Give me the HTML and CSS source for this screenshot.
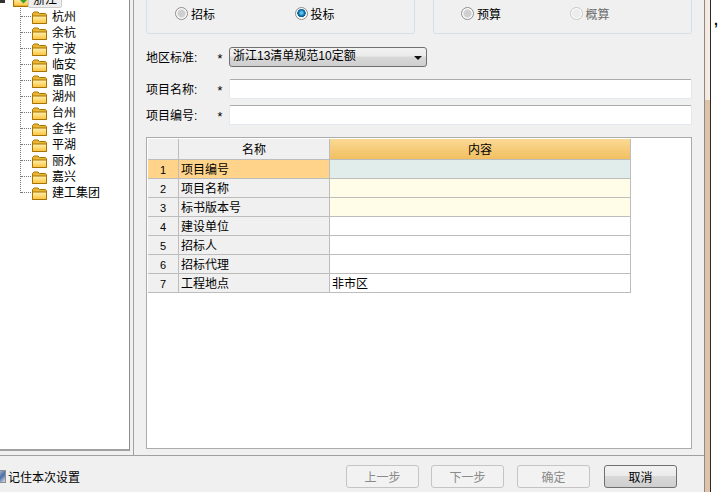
FILE: index.html
```html
<!DOCTYPE html>
<html lang="zh-CN">
<head>
    <meta charset="UTF-8">
    <title>新建项目</title>
    <link rel="stylesheet" href="styles.css">
</head>
<body>
    <svg class="defs" width="0" height="0">
        <defs>
            <linearGradient id="folder-fill" x1="0" y1="0" x2="0" y2="1">
                <stop offset="0" stop-color="#fff2b0"/>
                <stop offset="1" stop-color="#fdc13a"/>
            </linearGradient>
            <symbol id="folder" viewBox="0 0 16 13">
                <path d="M1.5 12.5V2.500L3 1h4l1.500 1.500h6l1 1v9z" fill="#e8b53a" stroke="#a87400"/>
                <path d="M1.500 12.500V5h14v7.500z" fill="url(#folder-fill)" stroke="#a87400"/>
            </symbol>
        </defs>
    </svg>

    <div class="window">
        <div class="dialog">
            <div class="top">
                <div class="tree-panel">
                    <div class="tree-root">
                        <span class="expander"></span>
                        <svg class="folder-open" width="17" height="14"><use href="#folder"/><path d="M10 5h3v2h2l-3.500 3.500L8 7h2z" fill="#3ca02c"/></svg>
                        <span class="tree-root-label">浙江</span>
                    </div>
                    <ul class="tree">
                        <li class="tree-row"><i class="tick"></i><svg width="16" height="13"><use href="#folder"/></svg><span>杭州</span></li>
                        <li class="tree-row"><i class="tick"></i><svg width="16" height="13"><use href="#folder"/></svg><span>余杭</span></li>
                        <li class="tree-row"><i class="tick"></i><svg width="16" height="13"><use href="#folder"/></svg><span>宁波</span></li>
                        <li class="tree-row"><i class="tick"></i><svg width="16" height="13"><use href="#folder"/></svg><span>临安</span></li>
                        <li class="tree-row"><i class="tick"></i><svg width="16" height="13"><use href="#folder"/></svg><span>富阳</span></li>
                        <li class="tree-row"><i class="tick"></i><svg width="16" height="13"><use href="#folder"/></svg><span>湖州</span></li>
                        <li class="tree-row"><i class="tick"></i><svg width="16" height="13"><use href="#folder"/></svg><span>台州</span></li>
                        <li class="tree-row"><i class="tick"></i><svg width="16" height="13"><use href="#folder"/></svg><span>金华</span></li>
                        <li class="tree-row"><i class="tick"></i><svg width="16" height="13"><use href="#folder"/></svg><span>平湖</span></li>
                        <li class="tree-row"><i class="tick"></i><svg width="16" height="13"><use href="#folder"/></svg><span>丽水</span></li>
                        <li class="tree-row"><i class="tick"></i><svg width="16" height="13"><use href="#folder"/></svg><span>嘉兴</span></li>
                        <li class="tree-row"><i class="tick"></i><svg width="16" height="13"><use href="#folder"/></svg><span>建工集团</span></li>
                    </ul>
                </div>

                <div class="main">
                    <div class="groups">
                        <div class="group group-left">
                            <label class="radio radio-first"><i class="radio-dot"></i>招标</label>
                            <label class="radio"><i class="radio-dot checked"></i>投标</label>
                        </div>
                        <div class="group group-right">
                            <label class="radio radio-first"><i class="radio-dot"></i>预算</label>
                            <label class="radio disabled"><i class="radio-dot"></i>概算</label>
                        </div>
                    </div>

                    <div class="field field-select">
                        <span class="field-label">地区标准:</span>
                        <span class="required">*</span>
                        <div class="select">浙江13清单规范10定额<i class="caret"></i></div>
                    </div>
                    <div class="field field-name">
                        <span class="field-label">项目名称:</span>
                        <span class="required">*</span>
                        <div class="input"></div>
                    </div>
                    <div class="field field-code">
                        <span class="field-label">项目编号:</span>
                        <span class="required">*</span>
                        <div class="input"></div>
                    </div>

                    <div class="grid-box">
                        <table class="grid">
                            <thead>
                                <tr><th class="col-num"></th><th class="col-name">名称</th><th class="col-content active">内容</th></tr>
                            </thead>
                            <tbody>
                                <tr class="current"><td class="col-num">1</td><td class="col-name">项目编号</td><td class="col-content cell-focus"></td></tr>
                                <tr><td class="col-num">2</td><td class="col-name">项目名称</td><td class="col-content cell-req"></td></tr>
                                <tr><td class="col-num">3</td><td class="col-name">标书版本号</td><td class="col-content cell-req"></td></tr>
                                <tr><td class="col-num">4</td><td class="col-name">建设单位</td><td class="col-content"></td></tr>
                                <tr><td class="col-num">5</td><td class="col-name">招标人</td><td class="col-content"></td></tr>
                                <tr><td class="col-num">6</td><td class="col-name">招标代理</td><td class="col-content"></td></tr>
                                <tr><td class="col-num">7</td><td class="col-name">工程地点</td><td class="col-content">非市区</td></tr>
                            </tbody>
                        </table>
                    </div>
                </div>
            </div>

            <div class="footer">
                <label class="remember"><i class="check"></i>记住本次设置</label>
                <div class="buttons">
                    <button class="btn" disabled>上一步</button>
                    <button class="btn" disabled>下一步</button>
                    <button class="btn" disabled>确定</button>
                    <button class="btn btn-primary">取消</button>
                </div>
            </div>
        </div>

        <div class="scroll-strip"><div class="strip-thumb"></div></div>
        <div class="page-edge">,</div>
    </div>
</body>
</html>
```

FILE: styles.css
```css
html, body { margin: 0; height: 100%; overflow: hidden; background: #fff; }
body { font-family: "Liberation Sans", "Noto Sans CJK SC", sans-serif; font-size: 12px; color: #000; }
.defs { position: absolute; }
.window { display: flex; height: 492px; }
.dialog { width: 704px; height: 492px; background: #f0f0f0; display: flex; flex-direction: column; flex-shrink: 0; }
.top { height: 456px; display: flex; border-bottom: 1px solid #a0a0a0; box-sizing: border-box; }

/* tree on the left */
.tree-panel { width: 130px; height: 451px; background: #fff; border-right: 1px solid #8c8c8c; border-bottom: 2px solid #a0a0a0; box-sizing: border-box; overflow: hidden; flex-shrink: 0; }
.tree-root { height: 16px; margin-top: -8px; display: flex; align-items: center; }
.expander { width: 5px; height: 5px; background: #333; margin-right: 7px; flex-shrink: 0; }
.tree-root-label { background: #eee; border: 1px solid #ccc; border-radius: 2px; padding: 0 4px 0 4px; line-height: 14px; margin-left: -1px; }
.tree { list-style: none; margin: 0 0 0 20px; padding: 0; }
.tree-row { height: 16px; display: flex; align-items: center; background: repeating-linear-gradient(#777 0 1px, transparent 1px 2px) no-repeat 0 0 / 1px 100%; }
.tree-row:last-child { background-size: 1px 9px; }
.tick { width: 10px; margin-left: 1px; border-top: 1px dotted #777; flex-shrink: 0; }
.tree-row svg { flex-shrink: 0; margin-top: 2px; }
.tree-row span { margin: 2px 0 0 5px; line-height: 16px; }

/* right side */
.main { width: 571px; margin-left: 3px; border-left: 1px solid #a0a0a0; padding-left: 12px; box-sizing: border-box; }
.groups { display: flex; height: 35px; }
.group { height: 45px; margin-top: -11px; background: #f0f0f0; border: 1px solid #d5dfe8; border-radius: 3px; box-sizing: border-box; display: flex; padding-top: 14px; }
.group-left { width: 269px; }
.group-right { width: 259px; margin-left: 18px; }
.radio { display: flex; align-items: center; height: 18px; width: 122px; }
.radio-first { margin-left: 28px; }
.group-right .radio-first { margin-left: 27px; width: 109px; }
.radio.disabled { color: #6d6d6d; }
.radio-dot { width: 11px; height: 11px; border-radius: 50%; border: 1px solid #8e8e8e; background: radial-gradient(circle, #cfcfcf 0 3px, #eee 5px); margin-right: 3px; flex-shrink: 0; box-shadow: inset 0 0 0 1px #fff; }
.radio-dot.checked { background: radial-gradient(circle at 50% 45%, #5cc8ee 0 1px, #0a6fa8 3px, #0a5a8c 4px, #f0f0f0 4.500px); }
.radio.disabled .radio-dot { border-color: #c8c8c8; background: #ececec; }

.field { display: flex; align-items: center; height: 20px; }
.field-select { margin-top: 12px; }
.field-name { margin-top: 12px; }
.field-code { margin-top: 6px; }
.field-label { width: 70px; padding-bottom: 2px; }
.required { width: 13px; padding-top: 4px; font-size: 13px; font-family: "Liberation Mono", monospace; }
.select { width: 198px; height: 20px; box-sizing: border-box; border: 1px solid #707070; border-radius: 3px; background: linear-gradient(#f2f2f2 0, #ebebeb 45%, #d8d8d8 50%, #cfcfcf 100%); padding: 0 4px 2px 3px; line-height: 16px; display: flex; align-items: center; justify-content: space-between; }
.caret { width: 0; height: 0; margin-top: 3px; border-left: 4px solid transparent; border-right: 4px solid transparent; border-top: 4px solid #111; }
.input { width: 463px; height: 20px; box-sizing: border-box; background: #fff; border: 1px solid #e2e8ee; border-top-color: #ababab; border-radius: 2px; }

.grid-box { width: 546px; height: 312px; margin-top: 12px; box-sizing: border-box; background: #fff; border: 1px solid #ababab; padding: 1px 0 0 1px; }
.grid { border-collapse: collapse; table-layout: fixed; width: 482px; }
.grid th, .grid td { height: 16px; padding: 2px 2px 0; box-sizing: content-box; border-right: 1px solid #bdbdbd; border-bottom: 1px solid #bdbdbd; font-weight: normal; line-height: 16px; overflow: hidden; }
.grid th { height: 18px; background: #f0f0f0; text-align: center; }
.grid .col-num { width: 26px; background: #f0f0f0; text-align: center; font-size: 11px; }
.grid .col-name { width: 146px; background: #f0f0f0; }
.grid th.col-name { text-align: center; }
.grid .col-content { width: 296px; }
.grid th.active { background: linear-gradient(#fbd995, #f1bf60); }
.grid .current .col-num, .grid .current .col-name { background: #ffd48a; }
.grid .cell-focus { background: #e0edea; }
.grid .cell-req { background: #fffde8; }

/* bottom row */
.footer { height: 36px; display: flex; align-items: center; justify-content: space-between; }
.remember { display: flex; align-items: center; margin: 4px 0 0 -7px; }
.check { width: 11px; height: 11px; border: 1px solid #8e8f8f; background: linear-gradient(135deg, #dde3ea, #4a6da7 60%, #dde3ea); margin-right: 2px; }
.buttons { display: flex; gap: 13px; margin-right: 27px; margin-top: 5px; }
.buttons .btn:nth-child(1) { margin-right: -1px; }
.buttons .btn:nth-child(3) { margin-right: 1px; }
.btn { width: 73px; height: 23px; padding: 0; border: 1px solid #c4c4c4; border-radius: 3px; background: #f2f2f2; font: inherit; color: #8a8a8a; }
.btn-primary { border-color: #707070; color: #000; background: linear-gradient(#f2f2f2 0, #ebebeb 45%, #d8d8d8 50%, #cfcfcf 100%); }

/* sliver of the window behind */
.scroll-strip { width: 7px; height: 492px; box-sizing: border-box; border-left: 1px solid #8a8a8a; border-right: 1px solid #2a2a2a; background: linear-gradient(90deg, #f5e6da, #f7eee6); flex-shrink: 0; }
.strip-thumb { height: 392px; margin-top: 100px; background: #dfc2a8; }
.page-edge { padding: 12px 0 0 3px; font-size: 14px; font-weight: bold; }
```
